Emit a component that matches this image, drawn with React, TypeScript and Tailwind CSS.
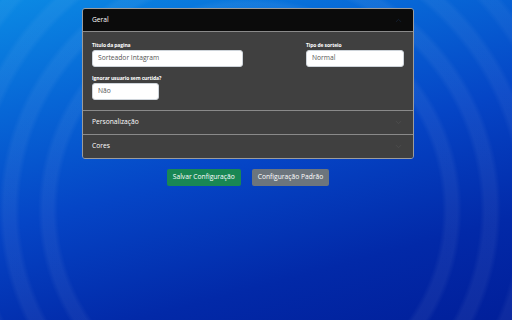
import { ChevronDown, ChevronUp } from 'lucide-react';

const Field = ({ label, value, width }: { label: string; value: string; width: string }) => (
  <div className="flex flex-col">
    <span className="text-[5px] font-bold leading-[6px] text-white tracking-[-0.1px] mb-[2px]">{label}</span>
    <div className={`${width} h-[17px] bg-white rounded-[3px] border border-[#ced4da] flex items-center px-[5px] text-[6.7px] text-[#555]`}>
      {value}
    </div>
  </div>
);

const Row = ({ title }: { title: string }) => (
  <div className="h-[24px] bg-[#404040] border-t border-[#8a8a8a] flex items-center justify-between px-[9px] text-[6.7px] font-medium text-white">
    <span>{title}</span>
    <ChevronDown size={9} strokeWidth={1.2} className="text-[#5a5a5a] mr-[1px]" />
  </div>
);

export default function App() {
  return (
    <div
      className="w-full h-[320px] overflow-hidden font-['Open_Sans','Noto_Sans',sans-serif] bg-[radial-gradient(circle_at_250px_210px,transparent_0_192px,rgba(255,255,255,.055)_197px_207px,transparent_212px_230px,rgba(255,255,255,.055)_235px_246px,transparent_251px_269px,rgba(255,255,255,.05)_274px_285px,transparent_290px_308px,rgba(255,255,255,.045)_313px_324px,transparent_329px),linear-gradient(165deg,#0b8ae4_0%,#0766d6_25%,#0545c6_50%,#0229a8_78%,#011f9a_100%)]"
    >
      <div className="pt-[8px] pl-[82px] w-[414px]">
        <div className="rounded-[3px] border border-[#9c9c9c] overflow-hidden">
          <div className="h-[22px] bg-[#0b0b0b] flex items-center justify-between px-[9px] text-[6.7px] font-medium text-white">
            <span>Geral</span>
            <ChevronUp size={9} strokeWidth={1.2} className="text-[#1d3456] mr-[1px]" />
          </div>
          <div className="bg-[#404040] border-t border-[#8a8a8a] pt-[10px] pb-[10px] px-[9px] flex flex-col gap-[8px]">
            <div className="flex justify-between">
              <Field label="Titulo da pagina" value="Sorteador Intagram" width="w-[151px]" />
              <Field label="Tipo de sorteio" value="Normal" width="w-[98px]" />
            </div>
            <Field label="Ignorar usuario sem curtida?" value="Não" width="w-[67px]" />
          </div>
          <Row title="Personalização" />
          <Row title="Cores" />
        </div>
        <div className="flex justify-center gap-[11px] mt-[10px]">
          <button className="h-[17px] px-[6px] rounded-[2px] bg-[#198754] text-white text-[6.7px] font-medium">Salvar Configuração</button>
          <button className="h-[17px] px-[6px] rounded-[2px] bg-[#6c757d] text-white text-[6.7px] font-medium">Configuração Padrão</button>
        </div>
      </div>
    </div>
  );
}
